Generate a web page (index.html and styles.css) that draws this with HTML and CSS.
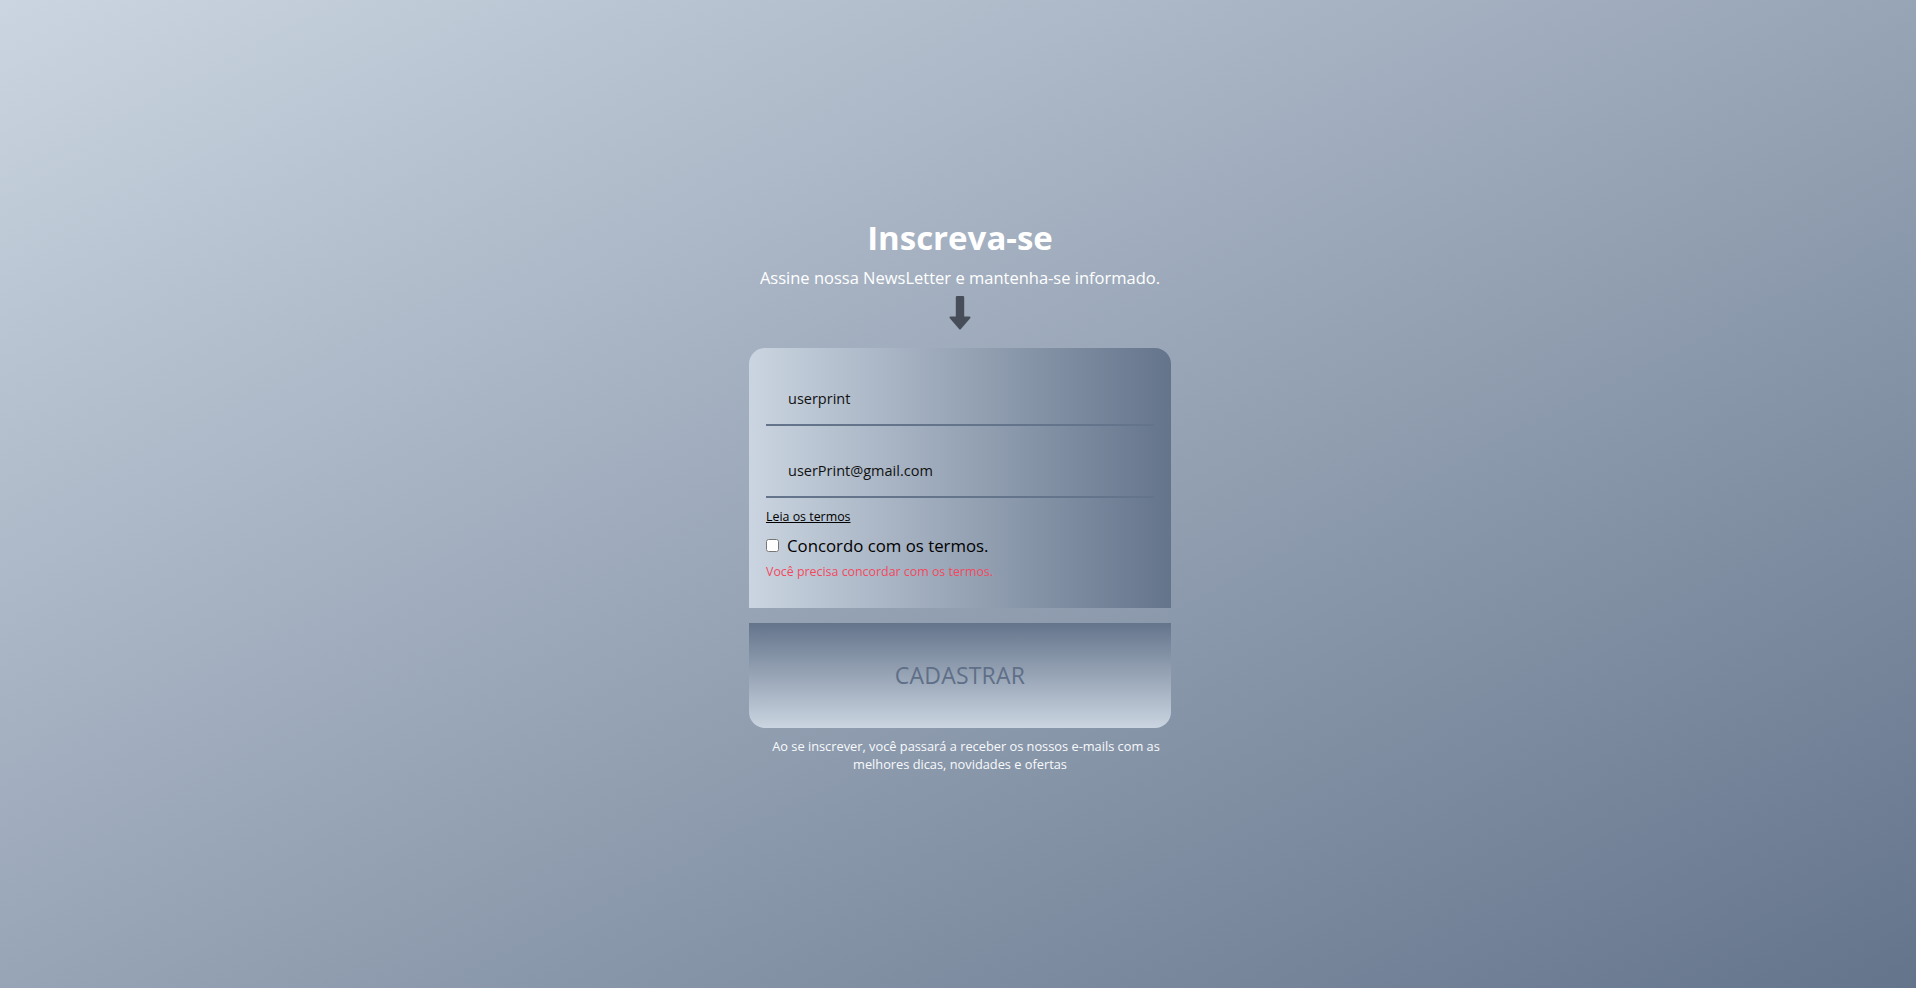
FILE: index.html
```html
<!DOCTYPE html>
<html lang="pt-BR">
<head>
<meta charset="utf-8">
<title>Inscreva-se</title>
<link rel="stylesheet" href="styles.css">
</head>
<body>
<main class="wrap">
  <h1 class="title">Inscreva-se</h1>
  <p class="subtitle">Assine nossa NewsLetter e mantenha-se informado.</p>
  <svg class="arrow" viewBox="0 0 22 34" width="22" height="34" aria-hidden="true">
    <path d="M8 0h6a1.2 1.2 0 0 1 1.2 1.2V20.5h5.3a1 1 0 0 1 .7 1.7l-9.5 11.1a1 1 0 0 1-1.4 0L0.8 22.2A1 1 0 0 1 1.5 20.5h5.3V1.2A1.2 1.2 0 0 1 8 0z" fill="#474e59"/>
  </svg>
  <form class="card">
    <input class="field" type="text" value="userprint">
    <input class="field" type="email" value="userPrint@gmail.com">
    <a class="terms-link" href="#">Leia os termos</a>
    <label class="check"><input type="checkbox"> <span>Concordo com os termos.</span></label>
    <p class="error">Você precisa concordar com os termos.</p>
  </form>
  <button class="submit" type="button">CADASTRAR</button>
  <p class="note">Ao se inscrever, você passará a receber os nossos e-mails com as melhores dicas, novidades e ofertas</p>
</main>
</body>
</html>
```
FILE: styles.css
```css
* { box-sizing: border-box; }
html, body { height: 100%; }
body {
  margin: 0;
  min-height: 100vh;
  background: linear-gradient(to bottom right, #cbd5e1, #64748b);
  font-family: "Open Sans", "Noto Sans", sans-serif;
  display: flex;
  align-items: center;
  justify-content: center;
}
.wrap {
  width: 422px;
  display: flex;
  flex-direction: column;
  align-items: center;
  margin-left: 4px;
  margin-top: 0;
}
.title {
  margin: 0 0 6px;
  color: #fff;
  font-size: 33px;
  font-weight: 700;
  line-height: 44px;
}
.subtitle {
  margin: 0;
  color: #fff;
  font-size: 16.5px;
  line-height: 24px;
}
.arrow { display: block; margin-top: 6px; }
.card {
  width: 100%;
  margin-top: 18px;
  padding: 26px 17px 28px;
  border-radius: 16px 16px 0 0;
  background: linear-gradient(to right, #cbd5e1, #64748b);
  display: flex;
  flex-direction: column;
}
.field {
  width: 100%;
  height: 52px;
  border: 0;
  border-bottom: 2px solid #64748b;
  background: transparent;
  padding: 0 22px;
  font-family: inherit;
  font-size: 14.5px;
  color: #111;
  outline: none;
}
.field + .field { margin-top: 20px; }
.terms-link {
  margin-top: 11px;
  color: #000;
  font-size: 12.4px;
  line-height: 16px;
  align-self: flex-start;
}
.check {
  margin-top: 10px;
  display: flex;
  align-items: center;
  font-size: 16.8px;
  line-height: 22px;
  color: #000;
}
.check input { margin: 0 8px 0 0; width: 13px; height: 13px; }
.error {
  margin: 7px 0 0;
  color: #f2495f;
  font-size: 12.4px;
  line-height: 16px;
}
.submit {
  width: 100%;
  height: 105px;
  margin-top: 15px;
  border: 0;
  border-radius: 0 0 16px 16px;
  background: linear-gradient(to bottom, #64748b, #cbd5e1);
  color: #5f6f87;
  font-family: inherit;
  font-size: 23px;
  letter-spacing: 0.2px;
  cursor: pointer;
}
.note {
  margin: 9px 0 0;
  padding: 0 2px;
  text-indent: 12px;
  text-align: center;
  color: #f8fafc;
  font-size: 12.8px;
  line-height: 18px;
}
```
